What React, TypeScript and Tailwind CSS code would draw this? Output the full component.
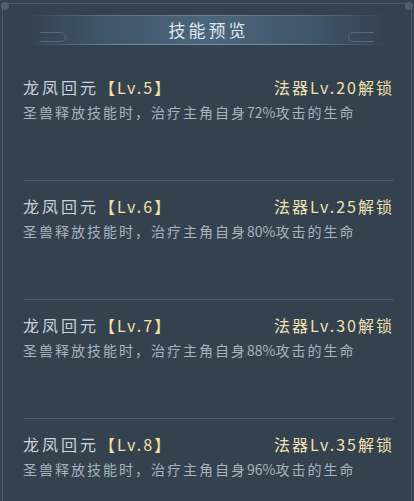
import React from "react";

const skills = [
  { lv: 5, unlock: 20, pct: 72 },
  { lv: 6, unlock: 25, pct: 80 },
  { lv: 7, unlock: 30, pct: 88 },
  { lv: 8, unlock: 35, pct: 96 },
];

const font = { fontFamily: '"Noto Sans CJK SC", "Noto Sans", sans-serif' };

export default function App() {
  return (
    <div
      className="relative w-[414px] h-[501px] overflow-hidden bg-[#344250]"
      style={font}
    >
      {/* outer frame */}
      <div className="pointer-events-none absolute left-[2px] right-[2px] top-[3px] bottom-[-4px] rounded-t-[6px] border border-[#4a5a69]" />
      <div className="pointer-events-none absolute left-[1px] top-[2px] w-[8px] h-[8px] rounded-full bg-[#4d5e6d]" />
      <div className="pointer-events-none absolute right-[1px] top-[2px] w-[8px] h-[8px] rounded-full bg-[#4d5e6d]" />

      {/* header band */}
      <div className="mt-[15px] mx-[30px] h-[30px] flex flex-col bg-[linear-gradient(90deg,rgba(74,99,121,0)_0%,#3f5569_20%,#4b667c_50%,#3f5569_80%,rgba(74,99,121,0)_100%)]">
        <div className="h-px bg-[linear-gradient(90deg,rgba(100,130,150,0)_0%,#5a768b_25%,#62819a_50%,#5a768b_75%,rgba(100,130,150,0)_100%)]" />
        <div className="flex-1 flex px-[10px]">
          <div className="self-end mb-[2px] w-[26px] h-[10px] rounded-r-[5px] border border-l-0 border-[#526b80]" />
          <div className="flex-1 flex items-center justify-center">
            <span className="text-[17px] leading-[28px] tracking-[3px] text-[#dfe7ec] pl-[3px]">
              技能预览
            </span>
          </div>
          <div className="self-end mb-[2px] w-[26px] h-[10px] rounded-l-[5px] border border-r-0 border-[#526b80]" />
        </div>
        <div className="h-px bg-[linear-gradient(90deg,rgba(100,130,150,0)_0%,#6a8aa2_25%,#7495ad_50%,#6a8aa2_75%,rgba(100,130,150,0)_100%)]" />
      </div>

      {/* skill list */}
      <div className="mt-[31px] pl-[23px] pr-[20px]">
        {skills.map((s, i) => (
          <div key={s.lv}>
            {i > 0 && <div className="h-px ml-px bg-[#4c5b69] mb-[14px]" />}
            <div className={i < skills.length - 1 ? "pb-[58px]" : ""}>
              <div className="flex items-center justify-between h-[22px]">
                <div className="flex items-center text-[16px] leading-[22px]">
                  <span className="text-[#c9d1d8] tracking-[3px]">龙凤回元</span>
                  <span className="text-[#f6e0a2] tracking-[2px]">
                    【Lv.{s.lv}】
                  </span>
                </div>
                <div className="text-[16px] leading-[22px] text-[#f1e0ae] tracking-[2px]">
                  法器Lv.{s.unlock}解锁
                </div>
              </div>
              <div className="mt-[4px] h-[20px] text-[14px] leading-[20px] text-[#a7b3bd] whitespace-nowrap">
                <span className="tracking-[2px]">圣兽释放技能时，治疗主角自身</span>
                <span className="tracking-[0px]">{s.pct}%</span>
                <span className="tracking-[2px]">攻击的生命</span>
              </div>
            </div>
          </div>
        ))}
      </div>
    </div>
  );
}
